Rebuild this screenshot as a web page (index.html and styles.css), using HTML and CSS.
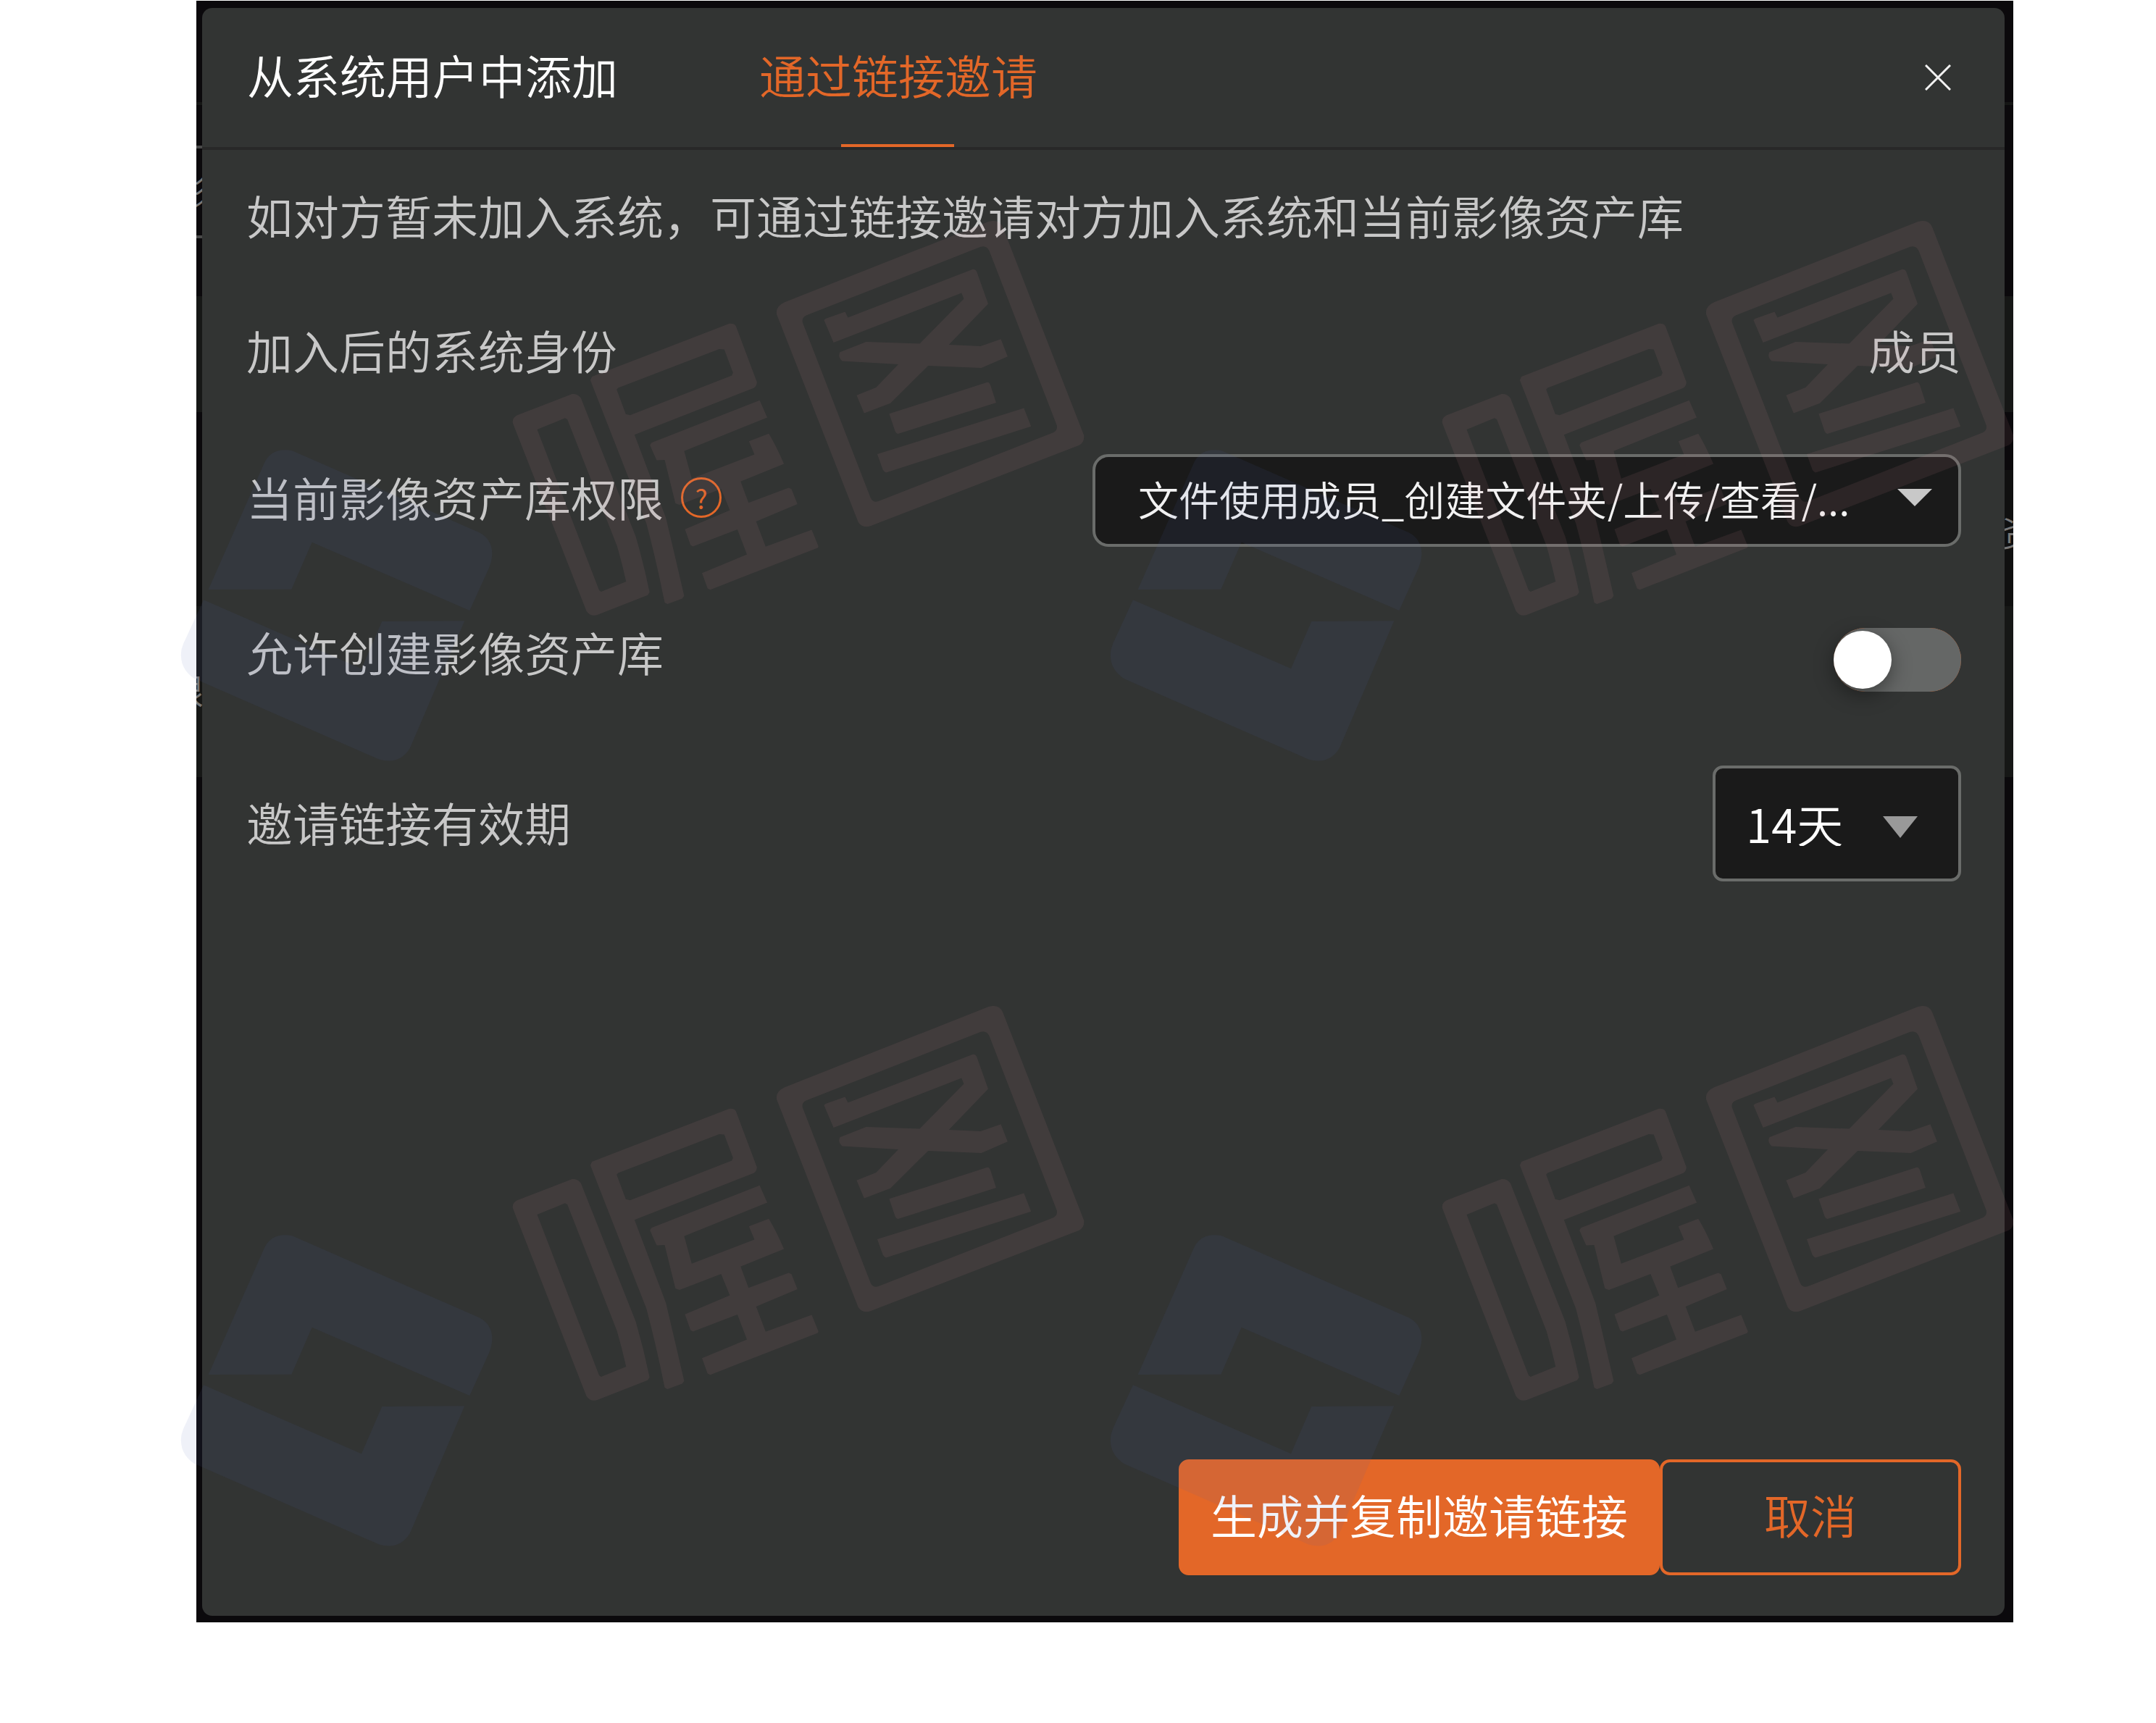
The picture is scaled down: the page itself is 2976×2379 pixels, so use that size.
FILE: index.html
```html
<!DOCTYPE html>
<html lang="zh-CN">
<head>
<meta charset="utf-8">
<title>通过链接邀请</title>
<link rel="stylesheet" href="styles.css">
</head>
<body>
<main class="stage">
  <div class="backdrop" aria-hidden="true">
    <div class="band band-top"></div>
    <div class="band band-nav"></div>
    <div class="band band-filter">影</div>
    <div class="band band-gap"></div>
    <div class="band band-card"></div>
    <div class="band band-space"></div>
    <div class="band band-head">资</div>
    <div class="band band-card band-list">限</div>
  </div>

  <section class="dialog" role="dialog" aria-label="通过链接邀请">
    <header class="dialog-head">
      <nav class="tabs">
        <button class="tab" type="button">从系统用户中添加</button>
        <button class="tab tab-active" type="button">通过链接邀请</button>
      </nav>
      <button class="close" type="button" aria-label="关闭">
        <svg width="36" height="36" viewBox="0 0 36 36"><path d="M1 1L35 35M35 1L1 35" stroke="#f2f2f2" stroke-width="3" fill="none"/></svg>
      </button>
    </header>

    <form class="dialog-body">
      <p class="hint">如对方暂未加入系统，可通过链接邀请对方加入系统和当前影像资产库</p>

      <div class="row row-role">
        <span class="label">加入后的系统身份</span>
        <span class="label">成员</span>
      </div>

      <div class="row row-access">
        <div class="label-group">
          <label class="label" for="access">当前影像资产库权限</label>
          <button class="help" type="button" aria-label="帮助">?</button>
        </div>
        <div class="picker picker-wide">
          <select id="access"><option>文件使用成员_创建文件夹/上传/查看/...</option></select>
          <svg class="caret" width="48" height="24" viewBox="0 0 48 24"><path d="M0 0H48L24 24Z" fill="#c8c8c8"/></svg>
        </div>
      </div>

      <div class="row row-create">
        <label class="label" for="create">允许创建影像资产库</label>
        <input class="switch" id="create" type="checkbox" role="switch">
      </div>

      <div class="row row-expiry">
        <label class="label" for="expiry">邀请链接有效期</label>
        <div class="picker picker-short">
          <select id="expiry"><option>14天</option></select>
          <svg class="caret" width="48" height="30" viewBox="0 0 48 30"><path d="M0 0H48L24 30Z" fill="#999"/></svg>
        </div>
      </div>
    </form>

    <footer class="dialog-foot">
      <button class="btn btn-primary" type="button">生成并复制邀请链接</button>
      <button class="btn btn-ghost" type="button">取消</button>
    </footer>
  </section>
</main>

<svg class="watermark" width="2976" height="2379" viewBox="0 0 2976 2379" aria-hidden="true">
  <defs>
    <g id="mark">
      <g transform="translate(240 576) scale(.3333 .3954)" fill="#5368b0" fill-opacity=".09">
        <path d="M372 165Q402 103 490 117L1265 403Q1325 430 1317 490Q1315 505 1306 525L1225 675L572 437L487 601L143 602Z"/>
        <path d="M123 638L777 878L862 713L1204 711L978 1155Q935 1215 850 1195L85 913Q18 875 32 810L40 790Z"/>
      </g>
      <g transform="translate(680 276) scale(.5485 .3954)" fill="#d08c98" fill-opacity=".1" fill-rule="evenodd">
        <path d="M735 357L1248 76Q1275 66 1284 96L1488 822Q1490 845 1476 857L952 1138Q930 1148 920 1125L715 400Q711 372 735 357ZM790 403L1228 164Q1243 158 1250 178L1420 788Q1422 804 1412 812L970 1053Q957 1058 951 1040L780 428Q777 411 790 403Z"/>
        <path d="M838 415L887 391L894 411L1205 244Q1214 239 1218 250L1247 363L1148 506L1228 511L1279 486L1296 547L1230 587L1096 579L1001 710L935 745L916 682L965 655L1021 574L880 563Q868 548 874 532L940 496L1075 502L1186 345L1180 325L858 498L834 420Z"/>
        <path d="M998 747L1245 637Q1250 637 1253 648L1267 708L1020 817Q1015 815 1013 808Z"/>
        <path d="M968 888L1337 727L1355 791L990 952Q984 948 982 942Z"/>
        <path d="M62 752L200 678Q215 677 222 692L360 1175Q380 1270 395 1370L390 1380L262 1450Q245 1455 236 1435L51 780Q48 762 62 752ZM112 802L182 762L188 766L313 1208Q326 1270 336 1333L273 1368L268 1363Z"/>
        <path d="M250 617L596 432Q607 430 612 440L665 636Q665 650 657 657L357 820L436 1110Q460 1250 482 1383L477 1392L440 1411L433 1406Q412 1260 387 1130L246 630ZM316 656L570 521L583 522L605 604L602 613L346 752L335 748L312 662Z"/>
        <path d="M400 848L672 700L691 760L482 877L501 973L659 889L645 843L695 816Q716 865 733 922L624 983L644 1058L745 1005L752 1010L767 1062L663 1123L687 1211L803 1152L820 1210L818 1215L548 1361L541 1357L527 1303L640 1238L616 1151L504 1210L498 1205L484 1150L597 1084L575 1009L470 1065L460 1060L433 908L413 909Q403 880 396 856Z"/>
      </g>
    </g>
  </defs>
  <use href="#mark"/>
  <use href="#mark" x="1283"/>
  <use href="#mark" y="1084"/>
  <use href="#mark" x="1283" y="1084"/>
</svg>
</body>
</html>
```
FILE: styles.css
```css
* {
  box-sizing: border-box;
}

body {
  margin: 0;
  min-height: 100vh;
  padding: 1px 197px 139px 271px;
  display: flex;
  flex-direction: column;
  position: relative;
  background: #fff;
  color: #c8c8c8;
  font-family: "Noto Sans CJK SC", sans-serif;
  font-size: 64px;
  line-height: 64px;
  font-weight: 350;
}

button,
select {
  font: inherit;
  color: inherit;
  margin: 0;
  padding: 0;
  border: 0;
  background: none;
}

.stage {
  flex: 1;
  display: flex;
  position: relative;
  overflow: hidden;
  padding: 10px 12px 9px 8px;
  background: #0b090c;
}

/* Dimmed page behind the dialog */
.backdrop {
  position: absolute;
  inset: 0;
  display: flex;
  flex-direction: column;
  color: #777;
  font-size: 48px;
  line-height: 48px;
}

.band-top {
  height: 144px;
  border-bottom: 4px solid #151615;
}

.band-nav {
  height: 56px;
}

.band-filter {
  width: 240px;
  height: 128px;
  margin-left: -30px;
  padding-top: 32px;
  border-top: 4px solid #4a4a4a;
  border-bottom: 4px solid #4a4a4a;
}

.band-gap {
  height: 80px;
}

.band-card {
  height: 160px;
  background: #161716;
}

.band-space {
  height: 80px;
}

.band-head {
  height: 188px;
  padding-top: 60px;
  background: #101010;
  text-align: right;
  margin-right: -32px;
}

.band-list {
  height: 236px;
  padding-top: 90px;
  margin-left: -38px;
}

.dialog {
  flex: 1;
  position: relative;
  display: flex;
  flex-direction: column;
  border-radius: 14px;
  background: #323433;
}

.dialog-head {
  display: flex;
  justify-content: space-between;
  height: 196px;
  padding: 0 74px 0 62px;
  border-bottom: 4px solid #282828;
}

.tabs {
  display: flex;
  gap: 195px;
}

.tab {
  position: relative;
  padding-bottom: 10px;
  color: #fff;
}

.tab-active {
  color: #e36728;
}

.tab-active::after {
  content: "";
  position: absolute;
  left: 50%;
  bottom: 0;
  width: 156px;
  height: 4px;
  margin-left: -79px;
  background: #e36728;
}

.close {
  display: flex;
  align-items: center;
}

.dialog-body {
  flex: 1;
  padding: 57px 60px 0 61px;
}

.hint {
  margin: 0;
}

.row {
  display: flex;
  justify-content: space-between;
  align-items: flex-start;
}

.row-role {
  margin-top: 122px;
}

.row-access {
  margin-top: 113px;
}

.row-create {
  margin-top: 112px;
}

.row-expiry {
  margin-top: 102px;
}

.row-access .label-group {
  padding-top: 26px;
}

.row-expiry .label {
  padding-top: 45px;
}

.label-group {
  display: flex;
  align-items: flex-end;
  gap: 24px;
}

.help {
  width: 56px;
  height: 56px;
  margin-bottom: 2px;
  border: 3px solid #e36728;
  border-radius: 50%;
  color: #e36728;
  font-size: 36px;
  line-height: 44px;
  font-weight: 400;
  text-align: center;
}

.picker {
  display: grid;
  align-items: center;
}

.picker > * {
  grid-area: 1 / 1;
}

.picker select {
  appearance: none;
  width: 100%;
  height: 100%;
  border: 4px solid #6a6c6a;
  background: #1a1a1a;
  color: #fff;
}

.picker .caret {
  justify-self: end;
  pointer-events: none;
}

.picker-wide {
  width: 1199px;
  height: 128px;
}

.picker-wide select {
  padding: 0 0 6px 59px;
  border-radius: 22px;
  font-size: 56px;
  color: #f2f2f2;
}

.picker-wide .caret {
  margin: 0 40px 8px 0;
}

.picker-short {
  width: 343px;
  height: 160px;
}

.picker-short select {
  padding-left: 42px;
  padding-bottom: 2px;
  border-radius: 14px;
}

.picker-short .caret {
  margin: 10px 60px 0 0;
}

.switch {
  appearance: none;
  display: flex;
  align-items: center;
  width: 176px;
  height: 88px;
  margin: 0;
  border-radius: 44px;
  background: #e36728;
  box-shadow: inset 0 0 0 44px #656766;
}

.switch::before {
  content: "";
  width: 80px;
  height: 80px;
  border-radius: 50%;
  background: #fff;
  box-shadow: 0 8px 28px rgba(0, 0, 0, .4);
}

.dialog-foot {
  display: flex;
  justify-content: flex-end;
  padding: 0 60px 56px;
}

.btn {
  height: 160px;
  padding-bottom: 10px;
  border: 4px solid #e36728;
  border-radius: 14px;
}

.btn-primary {
  width: 664px;
  background: #e36728;
  color: #fff;
}

.btn-ghost {
  width: 416px;
  color: #e36728;
}

.watermark {
  position: absolute;
  top: 0;
  left: 0;
  pointer-events: none;
}
```
